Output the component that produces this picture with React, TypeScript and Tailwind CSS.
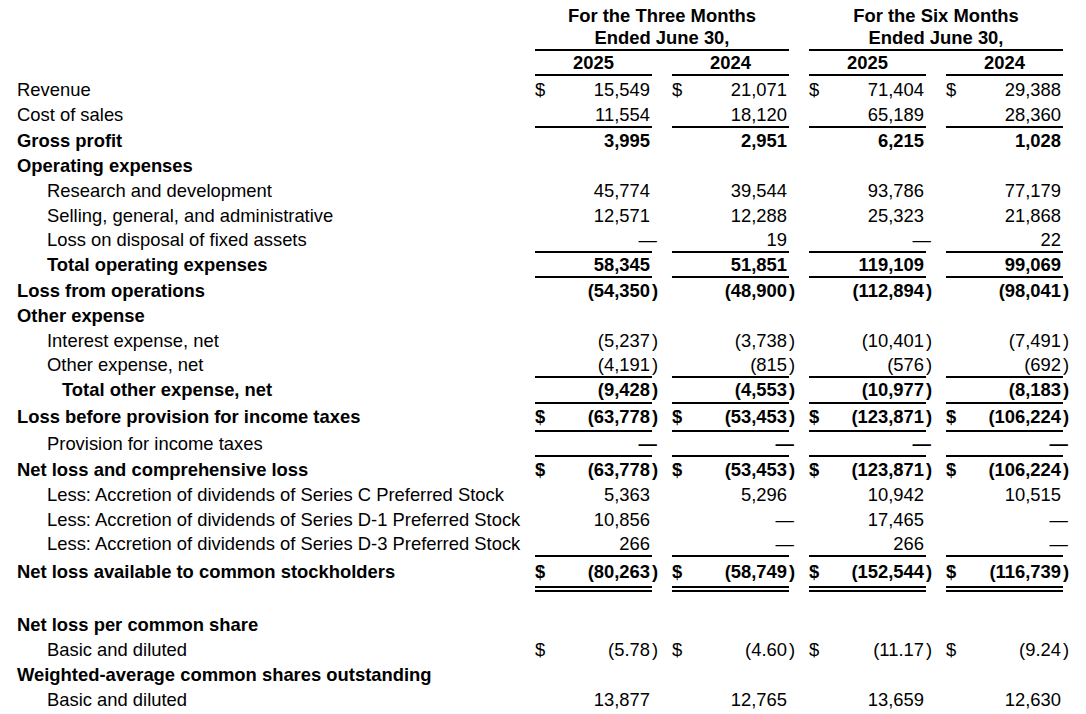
import React from "react";

type Row = {
  label?: string;
  indent?: 0 | 1 | 2;
  bold?: boolean;
  valBold?: boolean;
  dollar?: boolean;
  vals?: string[];
  border?: "single" | "double";
  h: string;
};

const rows: Row[] = [
  { label: "Revenue", dollar: true, vals: ["15,549", "21,071", "71,404", "29,388"], h: "h-[27px]" },
  { label: "Cost of sales", vals: ["11,554", "18,120", "65,189", "28,360"], border: "single", h: "h-[25px]" },
  { label: "Gross profit", bold: true, vals: ["3,995", "2,951", "6,215", "1,028"], h: "h-[25px]" },
  { label: "Operating expenses", bold: true, h: "h-[25px]" },
  { label: "Research and development", indent: 1, vals: ["45,774", "39,544", "93,786", "77,179"], h: "h-[25px]" },
  { label: "Selling, general, and administrative", indent: 1, vals: ["12,571", "12,288", "25,323", "21,868"], h: "h-[25px]" },
  { label: "Loss on disposal of fixed assets", indent: 1, vals: ["—", "19", "—", "22"], border: "single", h: "h-[25px]" },
  { label: "Total operating expenses", indent: 1, bold: true, vals: ["58,345", "51,851", "119,109", "99,069"], border: "single", h: "h-[25px]" },
  { label: "Loss from operations", bold: true, vals: ["(54,350)", "(48,900)", "(112,894)", "(98,041)"], h: "h-[25px]" },
  { label: "Other expense", bold: true, h: "h-[25px]" },
  { label: "Interest expense, net", indent: 1, vals: ["(5,237)", "(3,738)", "(10,401)", "(7,491)"], h: "h-[25px]" },
  { label: "Other expense, net", indent: 1, vals: ["(4,191)", "(815)", "(576)", "(692)"], border: "single", h: "h-[25px]" },
  { label: "Total other expense, net", indent: 2, bold: true, vals: ["(9,428)", "(4,553)", "(10,977)", "(8,183)"], border: "single", h: "h-[26px]" },
  { label: "Loss before provision for income taxes", bold: true, dollar: true, vals: ["(63,778)", "(53,453)", "(123,871)", "(106,224)"], border: "single", h: "h-[28px]" },
  { label: "Provision for income taxes", indent: 1, valBold: true, vals: ["—", "—", "—", "—"], border: "single", h: "h-[25px]" },
  { label: "Net loss and comprehensive loss", bold: true, dollar: true, vals: ["(63,778)", "(53,453)", "(123,871)", "(106,224)"], h: "h-[25px]" },
  { label: "Less: Accretion of dividends of Series C Preferred Stock", indent: 1, vals: ["5,363", "5,296", "10,942", "10,515"], h: "h-[25px]" },
  { label: "Less: Accretion of dividends of Series D-1 Preferred Stock", indent: 1, vals: ["10,856", "—", "17,465", "—"], h: "h-[25px]" },
  { label: "Less: Accretion of dividends of Series D-3 Preferred Stock", indent: 1, vals: ["266", "—", "266", "—"], border: "single", h: "h-[25px]" },
  { label: "Net loss available to common stockholders", bold: true, dollar: true, vals: ["(80,263)", "(58,749)", "(152,544)", "(116,739)"], border: "double", h: "h-[35px]" },
  { h: "h-[20px]" },
  { label: "Net loss per common share", bold: true, h: "h-[25px]" },
  { label: "Basic and diluted", indent: 1, dollar: true, vals: ["(5.78)", "(4.60)", "(11.17)", "(9.24)"], h: "h-[25px]" },
  { label: "Weighted-average common shares outstanding", bold: true, h: "h-[25px]" },
  { label: "Basic and diluted", indent: 1, vals: ["13,877", "12,765", "13,659", "12,630"], h: "h-[25px]" },
];

function borderCls(b: Row["border"], visible: boolean) {
  if (b === "single") return visible ? "border-b-2 border-black" : "border-b-2 border-transparent";
  if (b === "double") return visible ? "border-b-[6px] border-double border-black" : "border-b-[6px] border-double border-transparent";
  return "";
}

function indentCls(i?: number) {
  if (i === 1) return "pl-[47px]";
  if (i === 2) return "pl-[62px]";
  return "pl-[17px]";
}

function DataRow({ r }: { r: Row }) {
  const vb = r.bold || r.valBold;
  return (
    <div className={`flex ${r.h}`}>
      <div className={`w-[535px] shrink-0 flex items-center whitespace-nowrap ${indentCls(r.indent)} ${borderCls(r.border, false)} ${r.bold ? "font-bold" : ""}`}>
        {r.label}
      </div>
      {[0, 1, 2, 3].map((i) => {
        const v = r.vals ? r.vals[i] : undefined;
        const neg = v ? v.startsWith("(") && v.endsWith(")") : false;
        const main = neg && v ? v.slice(0, -1) : v;
        const dash = v === "—";
        return (
          <React.Fragment key={i}>
            <div className={`w-[117px] shrink-0 flex items-center justify-between ${borderCls(r.border, !!v)} ${vb ? "font-bold" : ""}`}>
              <span>{r.dollar && v ? "$" : ""}</span>
              <span className={dash ? "-mr-[5px]" : "pr-[2px]"}>{main}</span>
            </div>
            <div className={`w-[20px] shrink-0 flex items-center ${borderCls(r.border, false)} ${vb ? "font-bold" : ""}`}>
              {neg ? ")" : ""}
            </div>
          </React.Fragment>
        );
      })}
    </div>
  );
}

export default function App() {
  return (
    <div className="w-[1086px] h-[714px] bg-white text-black font-['Liberation_Sans',Arial,sans-serif] text-[18.4px] leading-[22px] overflow-hidden">
      <div className="flex h-[51px]">
        <div className="w-[535px] shrink-0" />
        <div className="w-[254px] shrink-0 border-b-2 border-black font-bold text-center pt-[5px]">
          <div>For the Three Months</div>
          <div>Ended June 30,</div>
        </div>
        <div className="w-[20px] shrink-0" />
        <div className="w-[254px] shrink-0 border-b-2 border-black font-bold text-center pt-[5px]">
          <div>For the Six Months</div>
          <div>Ended June 30,</div>
        </div>
      </div>
      <div className="flex h-[25px] font-bold">
        <div className="w-[535px] shrink-0" />
        {["2025", "2024", "2025", "2024"].map((y, i) => (
          <React.Fragment key={i}>
            <div className="w-[117px] shrink-0 flex items-center justify-center border-b-2 border-black">{y}</div>
            <div className="w-[20px] shrink-0" />
          </React.Fragment>
        ))}
      </div>
      {rows.map((r, i) => (
        <DataRow key={i} r={r} />
      ))}
    </div>
  );
}
